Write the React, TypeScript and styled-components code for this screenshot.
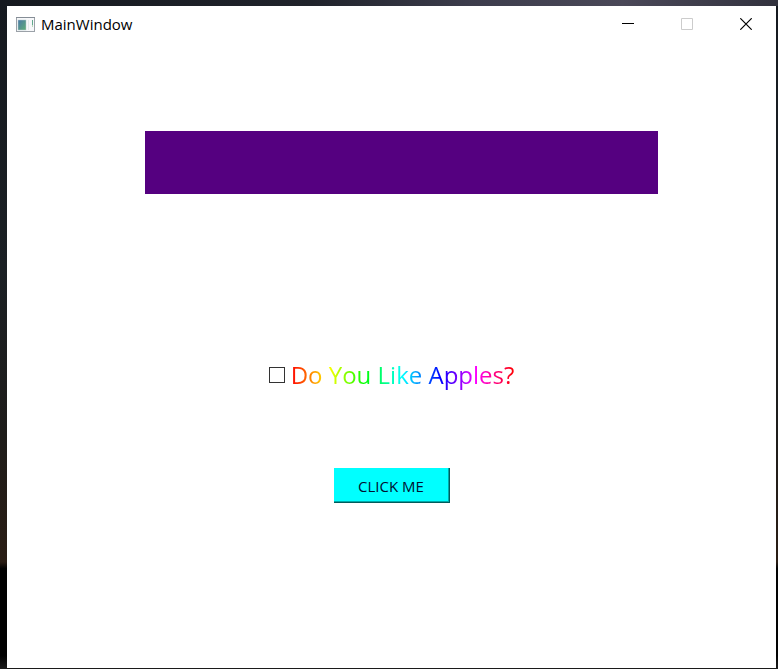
import React from "react";
import styled, { createGlobalStyle } from "styled-components";

const GlobalStyle = createGlobalStyle`
  * {
    box-sizing: border-box;
  }
  body {
    margin: 0;
    font-family: "Open Sans", "Noto Sans", sans-serif;
    color: #000;
  }
`;

const Desktop = styled.div`
  display: flex;
  min-height: 100vh;
  padding: 6px 2px 1px 7px;
  background:
    linear-gradient(90deg, #15191f 0%, #20232b 40%, #3c3c4b 60%, #4a4858 80%, #32323e 100%) top / 100% 6px no-repeat,
    linear-gradient(180deg, #15191f 0%, #1b2024 40%, #1e1c1a 65%, #2a1d14 84%, #020202 85%, #020202 98%, #1c1c1c 100%);
`;

const Window = styled.main`
  flex: 1;
  display: flex;
  flex-direction: column;
  background: #fff;
`;

const TitleBar = styled.header`
  display: flex;
  align-items: center;
  height: 36px;
  padding-left: 9px;
`;

const Title = styled.h1`
  flex: 1;
  margin: 0 0 0 6px;
  font-size: 15px;
  line-height: 20px;
  font-weight: 400;
`;

const CaptionButton = styled.button`
  display: flex;
  align-items: center;
  justify-content: center;
  width: 59px;
  height: 36px;
  padding: 0 1px 0 0;
  border: 0;
  background: transparent;
  color: #000;

  &:disabled {
    color: #ccc;
  }
`;

const Content = styled.section`
  display: flex;
  flex-direction: column;
  align-items: center;
  padding-top: 89px;
`;

const Banner = styled.div`
  align-self: stretch;
  height: 63px;
  margin: 0 118px 0 138px;
  background: #550080;
`;

const CheckLabel = styled.label`
  display: flex;
  align-items: center;
  gap: 6px;
  margin-top: 163px;
  font-size: 24px;
  line-height: 36px;
`;

const CheckBox = styled.input`
  appearance: none;
  width: 16px;
  height: 16px;
  margin: 0;
  border: 1px solid #333;
  background: #fff;

  &:checked {
    background: #333;
    box-shadow: inset 0 0 0 3px #fff;
  }
`;

const RainbowText = styled.span`
  background: linear-gradient(
    90deg,
    #f00 0%,
    #ff0 17%,
    #0f0 33%,
    #0ff 50%,
    #00f 67%,
    #f0f 83%,
    #f00 100%
  );
  background-clip: text;
  -webkit-background-clip: text;
  color: transparent;
`;

const PushButton = styled.button`
  width: 116px;
  height: 35px;
  margin-top: 75px;
  padding: 2px 0 0;
  border: solid #005c5c;
  border-width: 0 1px 1px 0;
  box-shadow: inset -1px -1px 0 #00a8a8;
  background: #0ff;
  color: #001030;
  font-family: inherit;
  font-size: 15px;
  line-height: 20px;
`;

const AppIcon = () => (
  <svg width="19" height="15" viewBox="0 0 19 15" aria-hidden="true">
    <defs>
      <linearGradient id="pane" x1="0" y1="0" x2="1" y2="1">
        <stop offset="0" stopColor="#4a78a8" />
        <stop offset="1" stopColor="#5eae76" />
      </linearGradient>
    </defs>
    <rect x="0.5" y="0.5" width="18" height="14" fill="#f7f8fa" stroke="#9ba1a8" />
    <path d="M0 0.5h19" stroke="#858d96" />
    <rect x="2" y="3" width="8" height="10" fill="url(#pane)" stroke="#b9c9cf" strokeWidth="0.5" />
    <path d="M12.5 3v10" stroke="#e4e7ea" />
    <rect x="16" y="3" width="1" height="5" fill="#62a98e" />
    <rect x="16" y="8" width="1" height="2" fill="#b8d8ba" />
  </svg>
);

type GlyphKind = "minimize" | "maximize" | "close";

const glyphPaths: Record<GlyphKind, string> = {
  minimize: "M0 5.5h12",
  maximize: "M0.5 0.5h11v11h-11z",
  close: "M0.3 0.3l11.4 11.4M11.7 0.3L0.3 11.7",
};

const Glyph = ({ kind }: { kind: GlyphKind }) => (
  <svg width="12" height="12" viewBox="0 0 12 12" aria-hidden="true">
    <path d={glyphPaths[kind]} fill="none" stroke="currentColor" strokeWidth={kind === "close" ? 1.2 : 1} />
  </svg>
);

export default function App() {
  return (
    <>
      <GlobalStyle />
      <Desktop>
        <Window>
          <TitleBar>
            <AppIcon />
            <Title>MainWindow</Title>
            <CaptionButton aria-label="Minimize">
              <Glyph kind="minimize" />
            </CaptionButton>
            <CaptionButton aria-label="Maximize" disabled>
              <Glyph kind="maximize" />
            </CaptionButton>
            <CaptionButton aria-label="Close">
              <Glyph kind="close" />
            </CaptionButton>
          </TitleBar>
          <Content>
            <Banner />
            <CheckLabel>
              <CheckBox type="checkbox" />
              <RainbowText>Do You Like Apples?</RainbowText>
            </CheckLabel>
            <PushButton type="button">CLICK ME</PushButton>
          </Content>
        </Window>
      </Desktop>
    </>
  );
}
